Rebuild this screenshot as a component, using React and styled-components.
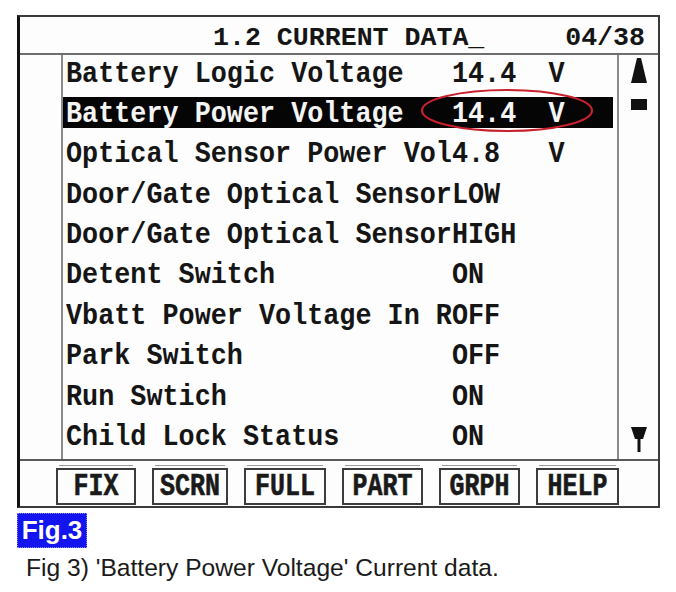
import React from "react";
import styled, { createGlobalStyle } from "styled-components";

const GlobalStyle = createGlobalStyle`
  body {
    margin: 0;
    background: #fff;
  }
`;

const Page = styled.div`
  width: 676px;
  height: 592px;
  padding: 15px 0 0 17px;
  box-sizing: border-box;
  background: #fff;
`;

const Screen = styled.div`
  width: 643px;
  box-sizing: border-box;
  border: 2px solid #3a3a3a;
  border-left: 3px solid #111;
  background: #fdfdfd;
  font-family: "Liberation Mono", "DejaVu Sans Mono", monospace;
  font-weight: bold;
  color: #151515;
`;

const Header = styled.div`
  height: 38px;
  display: flex;
  align-items: center;
  justify-content: space-between;
  padding: 6px 13px 0 193px;
  box-sizing: border-box;
  border-bottom: 2px solid #6e6e6e;
  font-size: 26.6px;
  white-space: pre;
`;

const Body = styled.div`
  display: grid;
  grid-template-columns: 43px 554px 1fr;
`;

const Gutter = styled.div`
  border-right: 2px solid #8a8a8a;
`;

const List = styled.div`
  display: flex;
  flex-direction: column;
  padding-right: 4px;
`;

const Row = styled.div`
  position: relative;
  height: 40.4px;
  padding-top: 2px;
  box-sizing: border-box;
`;

const Line = styled.div`
  height: 31px;
  display: flex;
  align-items: center;
  padding-left: 3px;
  background: ${p => (p.selected ? "#050505" : "transparent")};
  color: ${p => (p.selected ? "#f4f4f4" : "#151515")};
  font-size: 26.8px;
  white-space: pre;
`;

const Label = styled.span`
  display: inline-block;
  width: 24ch;
  overflow: hidden;
  transform: translateY(1.5px) scaleY(1.12);
  transform-origin: 50% 60%;
`;

const Value = styled.span`
  display: inline-block;
  transform: translateY(1.5px) scaleY(1.12);
  transform-origin: 50% 60%;
`;

const Ring = styled.svg`
  position: absolute;
  left: 357px;
  top: -7px;
  width: 174px;
  height: 45px;
  pointer-events: none;
`;

const Scroll = styled.div`
  border-left: 2px solid #8a8a8a;
  display: flex;
  flex-direction: column;
  align-items: center;
  padding: 3px 0 7px 0;
`;

const Thumb = styled.div`
  width: 16px;
  height: 11px;
  margin-top: 16px;
  background: #111;
`;

const Spacer = styled.div`
  flex: 1;
`;

const ButtonBar = styled.div`
  height: 44px;
  border-top: 2px solid #5a5a5a;
  display: flex;
  align-items: flex-end;
  gap: 16px;
  padding: 0 0 1px 36px;
`;

const Key = styled.div`
  width: ${p => p.w}px;
  height: 37px;
  box-sizing: border-box;
  border: 2px solid #3c3c3c;
  display: flex;
  align-items: center;
  justify-content: center;
  font-family: "Liberation Mono", monospace;
  font-weight: bold;
  font-size: 25px;
  color: #1a1a1a;
  position: relative;

  &::before {
    content: "";
    position: absolute;
    left: 1px;
    right: 1px;
    top: -5px;
    border-top: 1px solid #9a9a9a;
  }
`;

const KeyText = styled.span`
  display: inline-block;
  transform: scaleY(1.25);
  -webkit-text-stroke: 0.5px #1a1a1a;
`;

const FigTag = styled.div`
  margin-top: 5px;
  width: 70px;
  height: 35px;
  box-sizing: border-box;
  background: #1414ee;
  border: 1px dotted #8a8aff;
  color: #fff;
  font-family: "Liberation Sans", Arial, sans-serif;
  font-weight: bold;
  font-size: 26px;
  display: flex;
  align-items: center;
  justify-content: center;
`;

const Caption = styled.div`
  margin: 6px 0 0 9px;
  font-family: "Liberation Sans", Arial, sans-serif;
  font-size: 24.6px;
  color: #1a1a1a;
`;

const rows = [
  ["Battery Logic Voltage", "14.4  V"],
  ["Battery Power Voltage", "14.4  V", true],
  ["Optical Sensor Power Vol", "4.8   V"],
  ["Door/Gate Optical Sensor", "LOW"],
  ["Door/Gate Optical Sensor", "HIGH"],
  ["Detent Switch", "ON"],
  ["Vbatt Power Voltage In R", "OFF"],
  ["Park Switch", "OFF"],
  ["Run Swtich", "ON"],
  ["Child Lock Status", "ON"]
];

const keys = [
  ["FIX", 80],
  ["SCRN", 76],
  ["FULL", 82],
  ["PART", 81],
  ["GRPH", 81],
  ["HELP", 83]
];

function UpArrow() {
  return (
    <svg width="16" height="25" viewBox="0 0 16 25">
      <path d="M6 0h4l6 25H0z" fill="#111" />
    </svg>
  );
}

function DownArrow() {
  return (
    <svg width="16" height="25" viewBox="0 0 16 25">
      <path d="M0 0h16l-4 12h-2.5v13h-3V12H4z" fill="#111" />
    </svg>
  );
}

export default function App() {
  return (
    <Page>
      <GlobalStyle />
      <Screen>
        <Header>
          <span>1.2 CURRENT DATA_</span>
          <span>04/38</span>
        </Header>
        <Body>
          <Gutter />
          <List>
            {rows.map(([label, value, selected]) => (
              <Row key={label + value}>
                <Line selected={selected}>
                  <Label>{label}</Label>
                  <Value>{value}</Value>
                </Line>
                {selected && (
                  <Ring viewBox="0 0 174 45">
                    <ellipse cx="87" cy="22.5" rx="85" ry="20.5" fill="none" stroke="#c8202c" strokeWidth="2.2" />
                  </Ring>
                )}
              </Row>
            ))}
          </List>
          <Scroll>
            <UpArrow />
            <Thumb />
            <Spacer />
            <DownArrow />
          </Scroll>
        </Body>
        <ButtonBar>
          {keys.map(([name, w]) => (
            <Key key={name} w={w}>
              <KeyText>{name}</KeyText>
            </Key>
          ))}
        </ButtonBar>
      </Screen>
      <FigTag>Fig.3</FigTag>
      <Caption>Fig 3) 'Battery Power Voltage' Current data.</Caption>
    </Page>
  );
}
